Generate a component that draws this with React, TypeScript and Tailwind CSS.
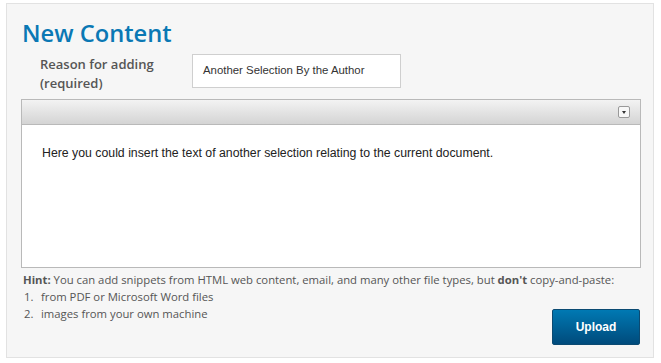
import React from "react";

const openSans = { fontFamily: '"Open Sans", "Liberation Sans", sans-serif' };
const arial = { fontFamily: '"Liberation Sans", Arial, sans-serif' };

export default function App() {
  return (
    <div className="w-[661px] h-[363px] bg-white pt-[3px] pl-[6px]">
      <div
        className="relative w-[648px] h-[355px] bg-[#f6f6f6] border border-[#e2e2e2] pl-[15px]"
        style={openSans}
      >
        <h1 className="pt-[13px] text-[23.7px] leading-[32px] font-semibold text-[#0a78b4]">
          New Content
        </h1>

        <div className="flex items-start mt-[5px]">
          <label className="w-[170px] pl-[18px] pt-[1px] text-[13px] leading-[19px] font-semibold text-[#555]">
            Reason for adding
            <br />
            (required)
          </label>
          <div
            className="w-[209px] h-[34px] bg-white border border-[#cfcfcf] flex items-center pl-[10px] text-[11.4px] text-[#333]"
            style={arial}
          >
            Another Selection By the Author
          </div>
        </div>

        <div className="mt-[6px] -ml-[1px] w-[620px] h-[169px] border border-[#b9b9b9] bg-white flex flex-col">
          <div className="h-[25px] bg-gradient-to-b from-[#f3f3f3] to-[#d4d4d4] border-b border-[#b9b9b9] flex items-center justify-end pr-[10px]">
            <div className="w-[12px] h-[12px] border border-[#999] rounded-[2px] bg-[#f7f7f7] flex items-center justify-center">
              <svg width="4" height="3" viewBox="0 0 4 3">
                <path d="M0 0h4L2 3z" fill="#333" />
              </svg>
            </div>
          </div>
          <p className="pl-[20px] pt-[19px] text-[12.3px] text-[#222]" style={arial}>
            Here you could insert the text of another selection relating to the current document.
          </p>
        </div>

        <p className="mt-[3px] pl-[1px] text-[11.3px] leading-[17px] text-[#555]">
          <b className="font-bold">Hint:</b> You can add snippets from HTML web content, email, and many other file types, but{" "}
          <b className="font-bold">don't</b> copy-and-paste:
        </p>
        <ol className="text-[11.3px] leading-[17px] text-[#555]">
          <li className="flex">
            <span className="w-[19px] pl-[2px]">1.</span>from PDF or Microsoft Word files
          </li>
          <li className="flex">
            <span className="w-[19px] pl-[2px]">2.</span>images from your own machine
          </li>
        </ol>

        <button
          className="absolute right-[13px] bottom-[12px] w-[88px] h-[36px] rounded-[2px] border border-[#0b4a72] bg-gradient-to-b from-[#0079b3] to-[#004b7c] text-white text-[12px] font-bold"
          style={arial}
        >
          Upload
        </button>
      </div>
    </div>
  );
}
